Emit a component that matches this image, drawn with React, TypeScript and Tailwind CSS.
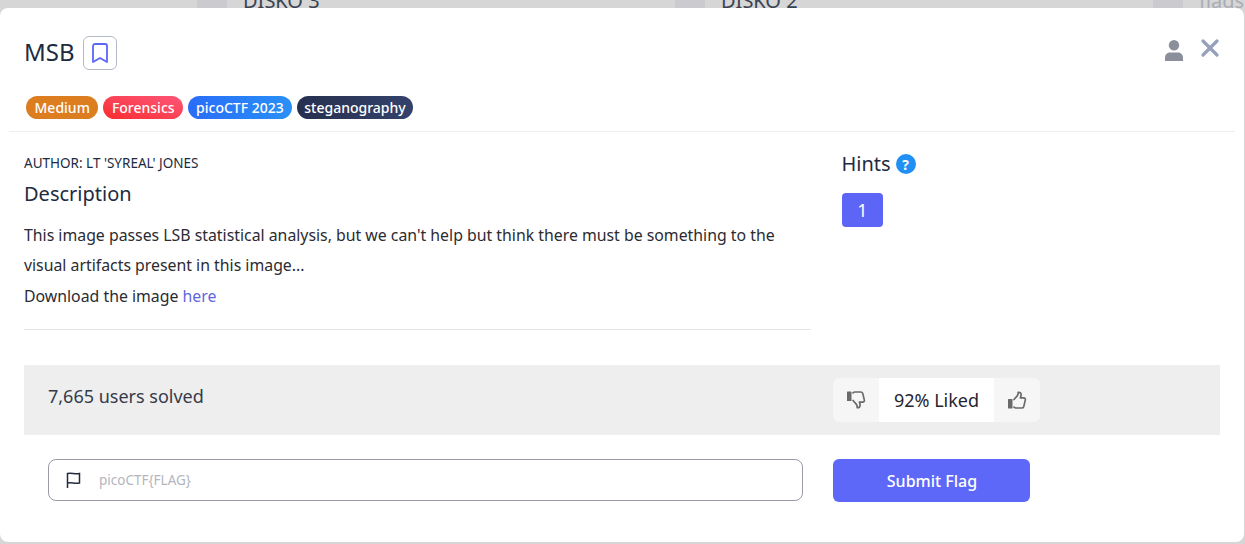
import { Bookmark, X } from 'lucide-react';

function Badge({ label, className }: { label: string; className: string }) {
  return (
    <span className={`h-[23px] rounded-full flex items-center text-[14px] font-medium text-white ${className}`}>
      {label}
    </span>
  );
}

function Thumb({ down }: { down?: boolean }) {
  return (
    <svg viewBox="0 0 20 20" className={`w-5 h-5 text-[#6a6a6a] ${down ? 'rotate-180 -scale-x-100' : ''}`}>
      <rect x="1" y="9" width="4.5" height="9.5" rx="0.6" fill="currentColor" />
      <path
        d="M7 9.5l3.2-3.600c.7-.8 1-1.800 1-2.800V2.300c1.600-.3 2.900.7 2.900 2.500 0 1-.3 2.100-.7 3.100h3.300c1.200 0 1.900 1.100 1.600 2.200l-1.500 6.300c-.3 1-1.100 1.600-2.100 1.600H9c-.8 0-1.500-.3-2-.8"
        fill="none"
        stroke="currentColor"
        strokeWidth="1.7"
        strokeLinecap="round"
        strokeLinejoin="round"
      />
    </svg>
  );
}

export default function App() {
  return (
    <div className="w-[1245px] h-[544px] overflow-hidden bg-[#d6d6d6] font-['Noto_Sans',sans-serif] text-[#212b3f]">
      {/* page behind the modal */}
      <div className="h-2 flex overflow-hidden text-[#3a4250] text-[20px] leading-none">
        <div className="w-[197px]" />
        <div className="w-[30px] bg-[#cbcbcf]" />
        <div className="w-[448px] pl-[16px] -mt-[9px]">DISKO 3</div>
        <div className="w-[30px] bg-[#cbcbcf]" />
        <div className="w-[448px] pl-[16px] -mt-[9px]">DISKO 2</div>
        <div className="w-[30px] bg-[#cbcbcf]" />
        <div className="pl-[16px] -mt-[9px] text-[#a9acb3]">flags</div>
      </div>

      {/* modal */}
      <div className="w-[1244px] h-[534px] bg-white rounded-lg pt-7 flex flex-col">
        <div className="px-6 flex items-start justify-between h-[34px]">
          <div className="flex items-center gap-2">
            <h1 className="text-[24px] leading-none -mt-[2px]">MSB</h1>
            <button className="w-[34px] h-[34px] rounded-md border border-[#b4b9c6] flex items-center justify-center">
              <Bookmark className="w-6 h-6 text-[#5b67f8]" strokeWidth={1.8} />
            </button>
          </div>
          <div className="flex items-start gap-[13px] -mr-1">
            <svg viewBox="0 0 18 21" className="w-[18px] h-[21px] mt-[4px] fill-[#8b8f9c]">
              <circle cx="9" cy="5.300" r="5.200" />
              <path d="M0 21v-3.500c0-3 2.500-5 5-5h8c2.500 0 5 2 5 5V21z" />
            </svg>
            <X className="w-7 h-7 -mt-[2px] text-[#98a1bc]" strokeWidth={2.8} />
          </div>
        </div>

        <div className="mt-[26px] px-[26px] flex gap-[5px]">
          <Badge label="Medium" className="bg-[#dc7d20] px-[8.5px]" />
          <Badge label="Forensics" className="bg-gradient-to-tr from-[#f82a2a] to-[#fd5577] px-[8.5px]" />
          <Badge label="picoCTF 2023" className="bg-gradient-to-r from-[#2a6cf8] to-[#2a90f5] px-2" />
          <Badge label="steganography" className="bg-gradient-to-r from-[#262f4e] to-[#34426c] px-[7.5px]" />
        </div>

        <div className="mx-[9px] mt-[12px] border-t border-[#eceef0]" />

        <div className="px-6 flex">
          <div className="w-[787px] h-[198px] border-b border-[#e3e4e8] pt-[23px]">
            <p className="text-[13.5px] leading-[17px]">AUTHOR: LT 'SYREAL' JONES</p>
            <h2 className="text-[20px] leading-[28px] mt-[8px]">Description</h2>
            <p className="text-[15.84px] leading-[30.5px] mt-[11.6px] text-[#2b2b33]">
              This image passes LSB statistical analysis, but we can't help but think there must be something to the
              visual artifacts present in this image...
              <br />
              Download the image <a className="text-[#5f67e0]">here</a>
            </p>
          </div>
          <div className="ml-[31px] pt-[18px]">
            <div className="flex items-center gap-[5px]">
              <span className="text-[20px] leading-[28px] -ml-[0.5px]">Hints</span>
              <span className="w-5 h-5 rounded-full bg-[#2090f5] text-white text-[14px] font-bold flex items-center justify-center">
                ?
              </span>
            </div>
            <button className="mt-[15px] w-[41px] h-[34px] rounded bg-[#5d65f6] text-white text-[18px]">1</button>
          </div>
        </div>

        <div className="mx-6 mt-[35px] h-[70px] bg-[#eeeeee] flex items-center pl-6">
          <div className="w-[785px] text-[18px] -mt-[7px] text-[#353b4a]">7,665 users solved</div>
          <div className="h-[44px] w-[207px] rounded-md bg-[#f6f6f6] flex overflow-hidden">
            <div className="w-[46px] flex items-center justify-center pr-[1px]">
              <Thumb down />
            </div>
            <div className="w-[115px] bg-white flex items-center justify-center pt-[1px] text-[18px] text-[#252531]">
              92% Liked
            </div>
            <div className="w-[46px] flex items-center justify-center">
              <Thumb />
            </div>
          </div>
        </div>

        <div className="mt-6 pl-12 flex">
          <div className="w-[755px] h-[42px] rounded-lg border border-[#9a9ba5] flex items-center pl-[17px]">
            <svg viewBox="0 0 15 16" className="w-[15px] h-4 text-[#222b3c]" fill="none" stroke="currentColor" strokeWidth="1.5">
              <path d="M1.500 16V1.500c2-.7 3.500-.4 6 0s3.500.4 6 0v9.500c-2.500.5-4 .3-6.500-.1s-3.500-.3-5.500.1" />
            </svg>
            <span className="ml-[18px] text-[13.5px] text-[#b5b5c0]">picoCTF&#123;FLAG&#125;</span>
          </div>
          <button className="ml-[30px] w-[197px] h-[43px] pl-[1px] rounded-md bg-[#5d68f8] text-white text-[16px] font-medium">
            Submit Flag
          </button>
        </div>
      </div>
    </div>
  );
}
